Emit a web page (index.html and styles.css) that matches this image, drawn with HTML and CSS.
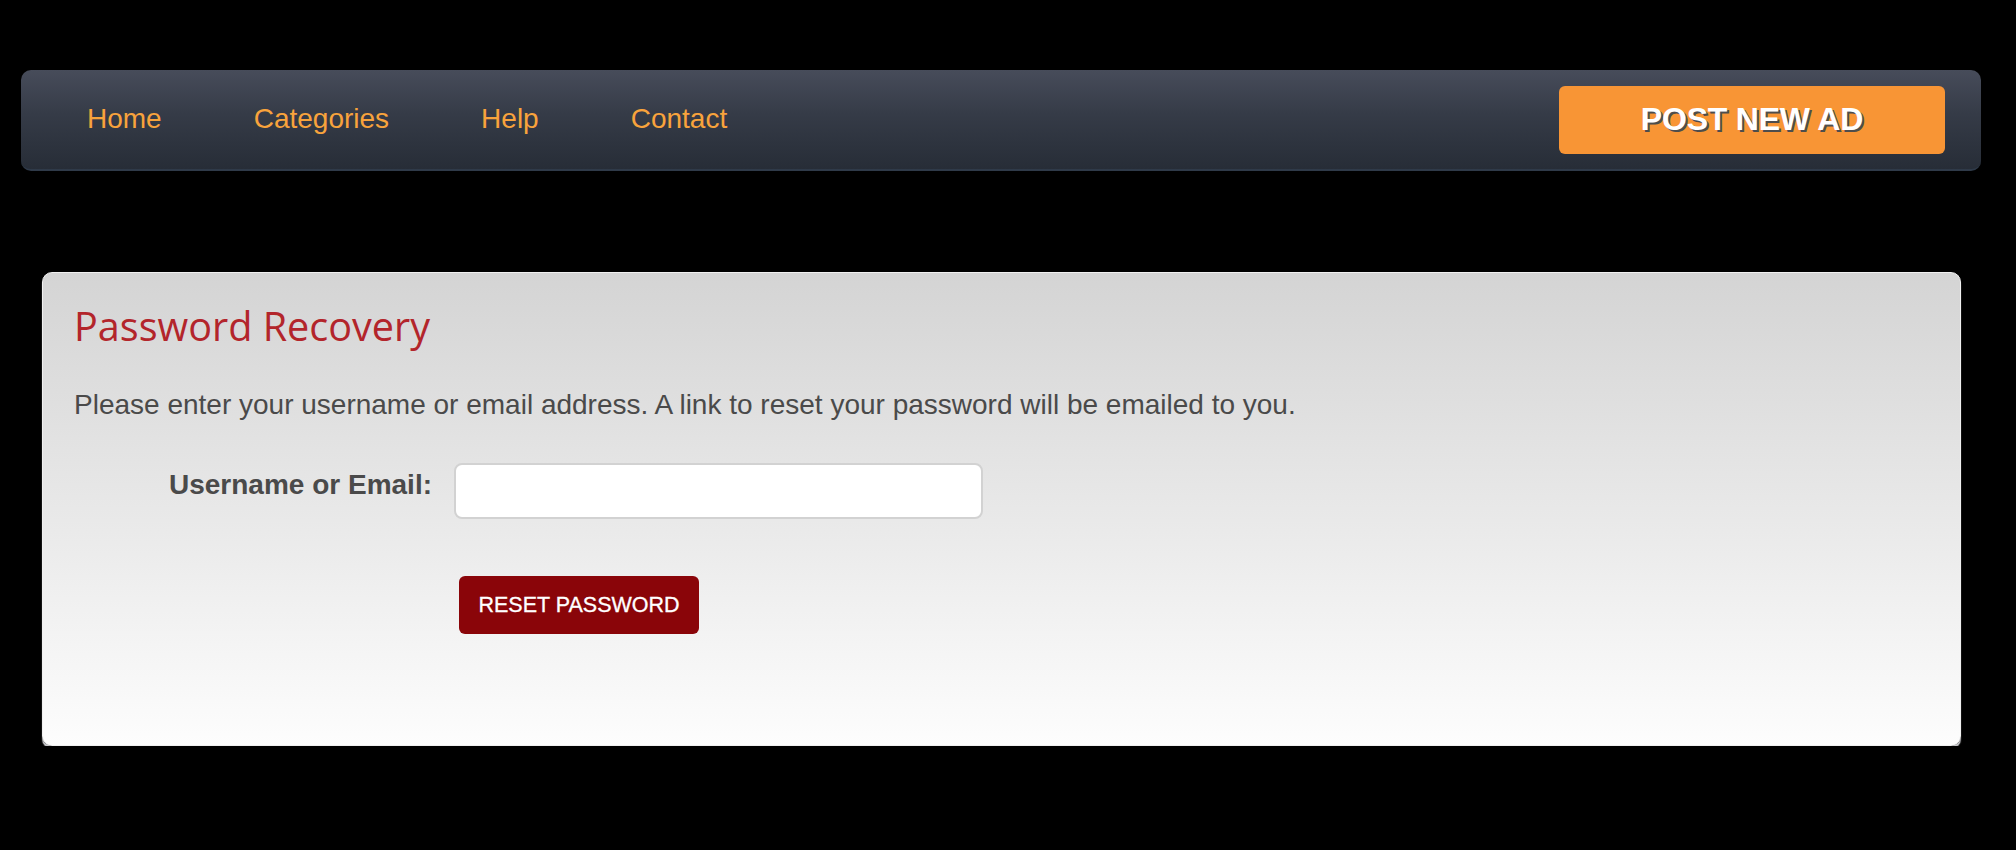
FILE: index.html
```html
<!DOCTYPE html>
<html lang="en">
<head>
<meta charset="utf-8">
<title>Password Recovery</title>
<link rel="stylesheet" href="styles.css">
</head>
<body>
<div class="page">
  <nav class="navbar">
    <ul class="nav-links">
      <li><a href="#">Home</a></li>
      <li><a href="#">Categories</a></li>
      <li><a href="#">Help</a></li>
      <li><a href="#">Contact</a></li>
    </ul>
    <a class="post-btn" href="#">POST NEW AD</a>
  </nav>

  <section class="card">
    <h1 class="card-title">Password Recovery</h1>
    <p class="card-text">Please enter your username or email address. A link to reset your password will be emailed to you.</p>
    <form class="recover-form">
      <div class="form-row">
        <label class="form-label" for="user">Username or Email:</label>
        <input class="form-input" id="user" type="text">
      </div>
      <div class="form-actions">
        <button class="reset-btn" type="button">RESET PASSWORD</button>
      </div>
    </form>
  </section>
</div>
</body>
</html>
```
FILE: styles.css
```css
* { box-sizing: border-box; }

html, body {
  margin: 0;
  padding: 0;
  background: #000;
  font-family: "Liberation Sans", Arial, sans-serif;
}

.page {
  padding: 70px 35px 0 21px;
}

.navbar {
  height: 101px;
  display: flex;
  align-items: center;
  padding: 0 36px 0 20px;
  border-radius: 10px;
  background: linear-gradient(to bottom, #474c5a 0%, #353b47 45%, #272d37 100%);
  border-bottom: 2px solid #2f3a49;
}

.nav-links {
  display: flex;
  list-style: none;
  margin: 0;
  padding: 0 0 2px;
}

.nav-links a {
  display: block;
  padding: 0 46px;
  font-size: 28px;
  color: #f8a33c;
  text-decoration: none;
  line-height: 32px;
}

.post-btn {
  margin-left: auto;
  width: 386px;
  height: 68px;
  display: flex;
  align-items: center;
  justify-content: center;
  background: #f89535;
  border-radius: 6px;
  color: #fff;
  font-weight: bold;
  font-size: 32px;
  letter-spacing: -0.2px;
  text-decoration: none;
  text-shadow: 2px 2px 0 #4d4d4d;
}

.card {
  margin: 101px 20px 0 21px;
  padding: 29px 31px 111px;
  border: 1px solid #f0f0f0;
  border-radius: 10px;
  background: linear-gradient(to bottom, #d4d4d4 0%, #e8e8e8 50%, #fdfdfd 100%);
  box-shadow: 0 3px 1px #c9c9cc;
}

.card-title {
  margin: 0;
  font-family: "Open Sans", "Liberation Sans", sans-serif;
  font-weight: normal;
  font-size: 39.6px;
  line-height: 48px;
  color: #b3252b;
}

.card-text {
  margin: 39px 0 0;
  font-size: 28px;
  line-height: 32px;
  color: #4a4a4a;
}

.recover-form {
  margin-top: 42px;
}

.form-row {
  display: flex;
  align-items: flex-start;
  gap: 22px;
}

.form-label {
  width: 358px;
  padding-top: 6px;
  text-align: right;
  font-weight: bold;
  font-size: 28px;
  line-height: 32px;
  color: #4a4a4a;
}

.form-input {
  width: 529px;
  height: 56px;
  border: 2px solid #d2d2d2;
  border-radius: 8px;
  background: #fff;
  font-size: 24px;
  padding: 0 12px;
}

.form-actions {
  margin-top: 57px;
  padding-left: 385px;
}

.reset-btn {
  width: 240px;
  height: 58px;
  border: none;
  border-radius: 6px;
  background: #8a0509;
  color: #fff;
  font-family: "Liberation Sans", Arial, sans-serif;
  font-size: 21.5px;
  -webkit-text-stroke: 0.3px #fff;
  padding: 0;
}
```
